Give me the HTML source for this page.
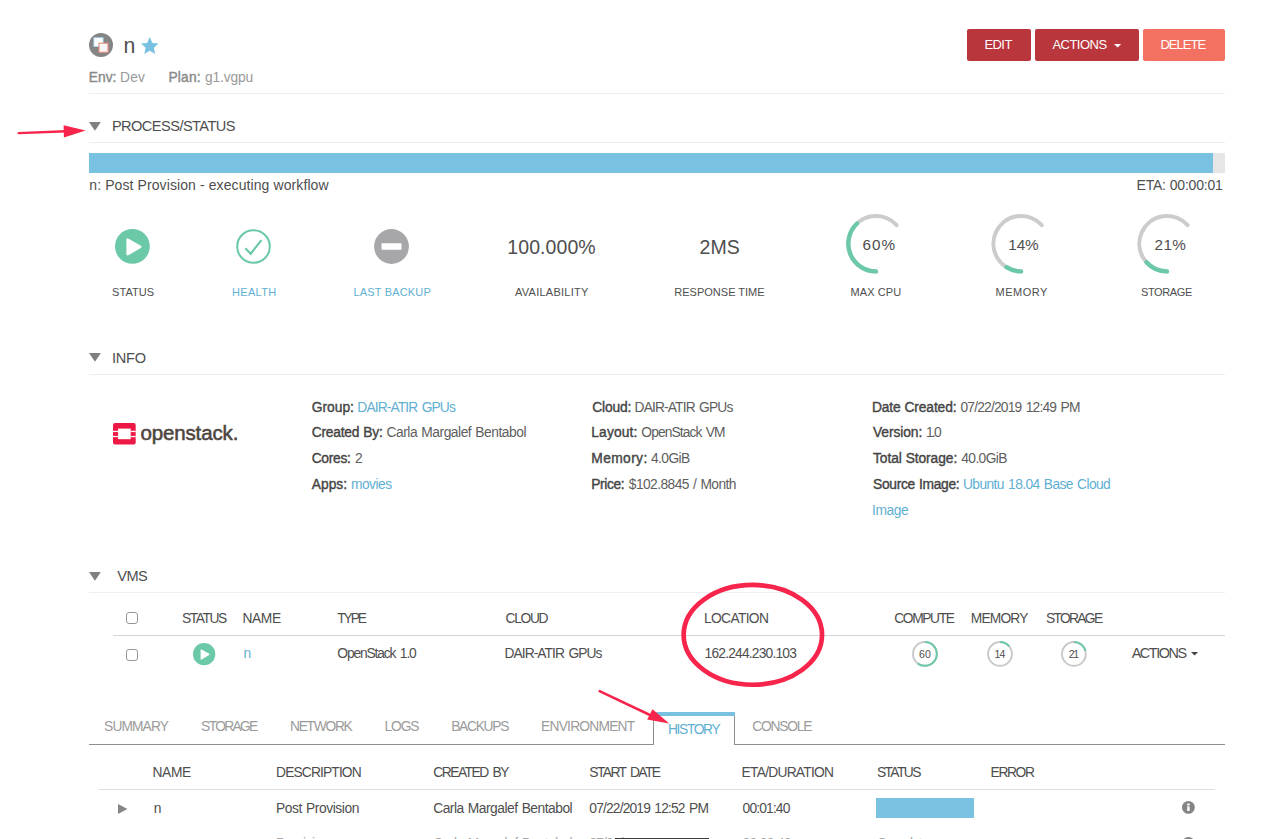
<!DOCTYPE html>
<html lang="en"><head><meta charset="utf-8"><title>n - Instance</title>
<style>
html,body{margin:0;padding:0;background:#fff;}
body{width:1263px;height:839px;overflow:hidden;position:relative;font-family:"Liberation Sans",sans-serif;color:#444;}
.t{position:absolute;white-space:nowrap;line-height:1;margin:0;padding:0;}
.b{font-weight:bold;}
.hr{position:absolute;height:1px;background:#eee;}
.bx{position:absolute;}
svg{position:absolute;overflow:visible;}
a{color:inherit;text-decoration:none;}
</style></head>
<body>
<header>
<svg style="left:88.5px;top:33px;" width="24" height="24" viewBox="0 0 24 24"><circle cx="12" cy="12" r="12" fill="#858585"/>
<rect x="4.9" y="4.7" width="9.2" height="8.8" fill="#fff" stroke="#a5d9ee" stroke-width="0.9"/>
<rect x="10.0" y="10.2" width="9" height="9.1" fill="#f6f6f6" stroke="#e98b7e" stroke-width="1.1"/></svg>
<h1 class="t" style="left:123.40px;top:35px;font-size:21.2px;color:#4e4e4e;font-weight:normal;">n</h1>
<svg style="left:140.8px;top:36.9px;" width="17.5" height="17.4" viewBox="0 0 17.5 17.4"><polygon fill="#78c1e0" points="8.75,0 11.4,5.9 17.5,6.5 12.9,10.7 14.2,17 8.75,13.7 3.3,17 4.6,10.7 0,6.5 6.1,5.9"/></svg>
<b class="t" style="left:88.70px;top:71px;font-size:13.8px;color:#8a8a8a;letter-spacing:0.042px;font-weight:normal;-webkit-text-stroke:0.4px #8a8a8a;">Env:</b>
<span class="t" style="left:120.00px;top:71px;font-size:13.8px;color:#999;letter-spacing:0.182px;">Dev</span>
<b class="t" style="left:168.50px;top:71px;font-size:13.8px;color:#8a8a8a;letter-spacing:0.147px;font-weight:normal;-webkit-text-stroke:0.4px #8a8a8a;">Plan:</b>
<span class="t" style="left:204.90px;top:71px;font-size:13.8px;color:#999;letter-spacing:-0.137px;">g1.vgpu</span>
<div class="hr" style="left:89px;top:93px;width:1136px;height:1px;background:#eee;"></div>
<div class="bx" style="left:967.2px;top:29.3px;width:63.4px;height:31.5px;background:#b9363c;border-radius:2px;"></div>
<div class="bx" style="left:1034.5px;top:29.3px;width:104.6px;height:31.5px;background:#b9363c;border-radius:2px;"></div>
<div class="bx" style="left:1143.1px;top:29.3px;width:82.1px;height:31.5px;background:#f37160;border-radius:2px;"></div>
<span class="t" style="left:984.40px;top:38px;font-size:13px;color:#fff;letter-spacing:-0.557px;">EDIT</span>
<span class="t" style="left:1052.40px;top:38px;font-size:13px;color:#fff;letter-spacing:-0.519px;">ACTIONS</span>
<svg style="left:1114.3px;top:44.1px;" width="7.2" height="3.6" viewBox="0 0 7.2 3.6"><polygon points="0,0 7.2,0 3.6,3.6" fill="#fff"/></svg>
<span class="t" style="left:1160.40px;top:38px;font-size:13px;color:#fff;letter-spacing:-0.960px;">DELETE</span>
</header>
<section aria-label="Process/Status">
<svg style="left:89.0px;top:122.1px;" width="11.9" height="8.8" viewBox="0 0 11.9 8.8"><polygon points="0,0 11.9,0 5.95,8.8" fill="#808080"/></svg>
<h2 class="t" style="left:111.90px;top:119px;font-size:14.6px;color:#4e4e4e;letter-spacing:-0.553px;font-weight:normal;">PROCESS/STATUS</h2>
<div class="hr" style="left:89px;top:142px;width:1136px;height:1px;background:#eee;"></div>
<div class="bx" style="left:89px;top:153px;width:1136px;height:20px;background:#e6e6e6;"></div>
<div class="bx" style="left:89px;top:153px;width:1124.3px;height:20px;background:#78c1e0;"></div>
<span class="t" style="left:89.30px;top:178px;font-size:14px;color:#4e4e4e;letter-spacing:0.096px;">n: Post Provision - executing workflow</span>
<span class="t" style="left:1136.50px;top:178px;font-size:14px;color:#4e4e4e;letter-spacing:-0.209px;word-spacing:0.335px;">ETA: 00:00:01</span>
<svg style="left:115.29999999999998px;top:228.75px;" width="34.8" height="34.8" viewBox="0 0 34.8 34.8"><circle cx="17.4" cy="17.4" r="17.4" fill="#6cc9a8"/><path d="M12.60,10.55 L25.30,17.90 L12.60,25.25 Z" fill="#fff" stroke="#fff" stroke-width="2.40" stroke-linejoin="round"/></svg>
<svg style="left:235.9px;top:228.65px;" width="35" height="35" viewBox="0 0 35 35"><circle cx="17.5" cy="17.5" r="16.3" fill="#fff" stroke="#6cc9a8" stroke-width="2.1"/><path d="M9.3,19.3 L14.7,24.8 L25.4,11.1" fill="none" stroke="#6cc9a8" stroke-width="2.2"/></svg>
<svg style="left:374.1px;top:228.65px;" width="35" height="35" viewBox="0 0 35 35"><circle cx="17.5" cy="17.5" r="17.4" fill="#a7a7a9"/><rect x="7.5" y="14.2" width="20" height="6.6" rx="1" fill="#fff"/></svg>
<span class="t" style="left:507.30px;top:238px;font-size:19.5px;color:#4e4e4e;letter-spacing:0.073px;">100.000%</span>
<span class="t" style="left:699.40px;top:238px;font-size:19.5px;color:#4e4e4e;letter-spacing:0.156px;">2MS</span>
<svg style="left:0;top:0;" width="1263" height="839" viewBox="0 0 1263 839"><path d="M876.00,271.40 A27.7,27.7 0 1 1 896.59,225.17" fill="none" stroke="#ccc" stroke-width="4" stroke-linecap="round"/><path d="M876.00,271.40 A27.7,27.7 0 0 1 857.04,223.51" fill="none" stroke="#6cc9a8" stroke-width="4.4" stroke-linecap="round"/></svg>
<svg style="left:0;top:0;" width="1263" height="839" viewBox="0 0 1263 839"><path d="M1021.10,271.40 A27.7,27.7 0 1 1 1041.69,225.17" fill="none" stroke="#ccc" stroke-width="4" stroke-linecap="round"/><path d="M1021.10,271.40 A27.7,27.7 0 0 1 1006.45,267.21" fill="none" stroke="#6cc9a8" stroke-width="4.4" stroke-linecap="round"/></svg>
<svg style="left:0;top:0;" width="1263" height="839" viewBox="0 0 1263 839"><path d="M1167.00,271.40 A27.7,27.7 0 1 1 1187.59,225.17" fill="none" stroke="#ccc" stroke-width="4" stroke-linecap="round"/><path d="M1167.00,271.40 A27.7,27.7 0 0 1 1146.45,262.28" fill="none" stroke="#6cc9a8" stroke-width="4.4" stroke-linecap="round"/></svg>
<span class="t" style="left:862.60px;top:237px;font-size:15.3px;color:#4e4e4e;letter-spacing:0.993px;">60%</span>
<span class="t" style="left:1008.30px;top:237px;font-size:15.3px;color:#4e4e4e;letter-spacing:-0.107px;">14%</span>
<span class="t" style="left:1154.60px;top:237px;font-size:15.3px;color:#4e4e4e;letter-spacing:0.343px;">21%</span>
<span class="t" style="left:112.10px;top:287px;font-size:11px;color:#4e4e4e;letter-spacing:0.055px;">STATUS</span>
<span class="t" style="left:231.90px;top:287px;font-size:11px;color:#5fb0d2;letter-spacing:0.352px;">HEALTH</span>
<span class="t" style="left:353.60px;top:287px;font-size:11px;color:#5fb0d2;letter-spacing:0.153px;">LAST BACKUP</span>
<span class="t" style="left:515.00px;top:287px;font-size:11px;color:#4e4e4e;letter-spacing:0.257px;">AVAILABILITY</span>
<span class="t" style="left:674.30px;top:287px;font-size:11px;color:#4e4e4e;letter-spacing:0.006px;">RESPONSE TIME</span>
<span class="t" style="left:850.60px;top:287px;font-size:11px;color:#4e4e4e;letter-spacing:0.088px;">MAX CPU</span>
<span class="t" style="left:995.60px;top:287px;font-size:11px;color:#4e4e4e;letter-spacing:0.467px;">MEMORY</span>
<span class="t" style="left:1141.00px;top:287px;font-size:11px;color:#4e4e4e;letter-spacing:-0.375px;">STORAGE</span>
</section>
<section aria-label="Info">
<svg style="left:89.0px;top:353.2px;" width="11.9" height="8.8" viewBox="0 0 11.9 8.8"><polygon points="0,0 11.9,0 5.95,8.8" fill="#808080"/></svg>
<h2 class="t" style="left:111.90px;top:351px;font-size:14.6px;color:#4e4e4e;letter-spacing:-0.203px;font-weight:normal;">INFO</h2>
<div class="hr" style="left:89px;top:374px;width:1136px;height:1px;background:#eee;"></div>
<svg style="left:113.0px;top:423.2px;" width="22.7" height="21.7" viewBox="0 0 22.7 21.7"><rect x="0" y="0" width="22.7" height="21.6" rx="2" fill="#ed1944"/>
<rect x="5.1" y="5.6" width="12.6" height="10.6" fill="#fff"/>
<rect x="0" y="7.8" width="5.1" height="1.3" fill="#fff"/><rect x="0" y="12.9" width="5.1" height="1.3" fill="#fff"/>
<rect x="17.7" y="7.8" width="5" height="1.3" fill="#fff"/><rect x="17.7" y="12.9" width="5" height="1.3" fill="#fff"/></svg>
<span class="t" style="left:140.40px;top:423px;font-size:20.5px;color:#4e4540;letter-spacing:-0.128px;-webkit-text-stroke:0.55px #4e4540;">openstack.</span>
<b class="t" style="left:311.70px;top:401px;font-size:13.8px;color:#444;letter-spacing:0.011px;font-weight:normal;-webkit-text-stroke:0.38px #444;">Group:</b>
<span class="t" style="left:357.30px;top:401px;font-size:13.8px;color:#5fb0d2;letter-spacing:-0.885px;word-spacing:1.416px;">DAIR-ATIR GPUs</span>
<b class="t" style="left:311.70px;top:426px;font-size:13.8px;color:#444;letter-spacing:-0.216px;word-spacing:0.346px;font-weight:normal;-webkit-text-stroke:0.38px #444;">Created By:</b>
<span class="t" style="left:386.50px;top:426px;font-size:13.8px;color:#5e5e5e;letter-spacing:-0.464px;word-spacing:0.742px;">Carla Margalef Bentabol</span>
<b class="t" style="left:311.70px;top:452px;font-size:13.8px;color:#444;letter-spacing:-0.301px;font-weight:normal;-webkit-text-stroke:0.38px #444;">Cores:</b>
<span class="t" style="left:355.00px;top:452px;font-size:13.8px;color:#5e5e5e;">2</span>
<b class="t" style="left:311.70px;top:478px;font-size:13.8px;color:#444;letter-spacing:0.038px;font-weight:normal;-webkit-text-stroke:0.38px #444;">Apps:</b>
<span class="t" style="left:351.00px;top:478px;font-size:13.8px;color:#5fb0d2;letter-spacing:-0.521px;">movies</span>
<b class="t" style="left:592.30px;top:401px;font-size:13.8px;color:#444;letter-spacing:-0.190px;font-weight:normal;-webkit-text-stroke:0.38px #444;">Cloud:</b>
<span class="t" style="left:634.60px;top:401px;font-size:13.8px;color:#5e5e5e;letter-spacing:-0.868px;word-spacing:1.388px;">DAIR-ATIR GPUs</span>
<b class="t" style="left:591.30px;top:426px;font-size:13.8px;color:#444;letter-spacing:0.146px;font-weight:normal;-webkit-text-stroke:0.38px #444;">Layout:</b>
<span class="t" style="left:641.30px;top:426px;font-size:13.8px;color:#5e5e5e;letter-spacing:-0.903px;word-spacing:1.446px;">OpenStack VM</span>
<b class="t" style="left:591.30px;top:452px;font-size:13.8px;color:#444;letter-spacing:0.379px;font-weight:normal;-webkit-text-stroke:0.38px #444;">Memory:</b>
<span class="t" style="left:651.00px;top:452px;font-size:13.8px;color:#5e5e5e;letter-spacing:-0.575px;">4.0GiB</span>
<b class="t" style="left:591.30px;top:478px;font-size:13.8px;color:#444;letter-spacing:-0.387px;font-weight:normal;-webkit-text-stroke:0.38px #444;">Price:</b>
<span class="t" style="left:628.80px;top:478px;font-size:13.8px;color:#5e5e5e;letter-spacing:-0.577px;word-spacing:0.924px;">$102.8845 / Month</span>
<b class="t" style="left:872.00px;top:401px;font-size:13.8px;color:#444;letter-spacing:-0.131px;word-spacing:0.209px;font-weight:normal;-webkit-text-stroke:0.38px #444;">Date Created:</b>
<span class="t" style="left:960.50px;top:401px;font-size:13.8px;color:#5e5e5e;letter-spacing:-0.814px;word-spacing:1.302px;">07/22/2019 12:49 PM</span>
<b class="t" style="left:873.00px;top:426px;font-size:13.8px;color:#444;letter-spacing:-0.088px;font-weight:normal;-webkit-text-stroke:0.38px #444;">Version:</b>
<span class="t" style="left:925.90px;top:426px;font-size:13.8px;color:#5e5e5e;letter-spacing:-1.753px;">1.0</span>
<b class="t" style="left:873.00px;top:452px;font-size:13.8px;color:#444;letter-spacing:-0.079px;word-spacing:0.126px;font-weight:normal;-webkit-text-stroke:0.38px #444;">Total Storage:</b>
<span class="t" style="left:961.30px;top:452px;font-size:13.8px;color:#5e5e5e;letter-spacing:-0.625px;">40.0GiB</span>
<b class="t" style="left:873.00px;top:478px;font-size:13.8px;color:#444;letter-spacing:-0.297px;word-spacing:0.476px;font-weight:normal;-webkit-text-stroke:0.38px #444;">Source Image:</b>
<span class="t" style="left:963.00px;top:478px;font-size:13.8px;color:#5fb0d2;letter-spacing:-0.595px;word-spacing:0.952px;">Ubuntu 18.04 Base Cloud</span>
<span class="t" style="left:872.00px;top:504px;font-size:13.8px;color:#5fb0d2;letter-spacing:-0.418px;">Image</span>
</section>
<section aria-label="VMs">
<svg style="left:89.0px;top:571.9px;" width="11.9" height="8.8" viewBox="0 0 11.9 8.8"><polygon points="0,0 11.9,0 5.95,8.8" fill="#808080"/></svg>
<h2 class="t" style="left:117.30px;top:569px;font-size:14.6px;color:#4e4e4e;letter-spacing:-0.645px;font-weight:normal;">VMS</h2>
<div class="hr" style="left:89px;top:592px;width:1136px;height:1px;background:#eee;"></div>
<div class="bx" style="left:126.1px;top:612.1px;width:10.2px;height:10px;border:1px solid #979797;border-radius:3px;background:#fff;"></div>
<div class="bx" style="left:126.1px;top:649.3px;width:10.2px;height:10px;border:1px solid #979797;border-radius:3px;background:#fff;"></div>
<span class="t" style="left:182.10px;top:612px;font-size:13.8px;color:#4e4e4e;letter-spacing:-1.475px;">STATUS</span>
<span class="t" style="left:242.40px;top:612px;font-size:13.8px;color:#4e4e4e;letter-spacing:-0.386px;">NAME</span>
<span class="t" style="left:337.30px;top:612px;font-size:13.8px;color:#4e4e4e;letter-spacing:-2.111px;">TYPE</span>
<span class="t" style="left:505.50px;top:612px;font-size:13.8px;color:#4e4e4e;letter-spacing:-1.308px;">CLOUD</span>
<span class="t" style="left:704.00px;top:612px;font-size:13.8px;color:#4e4e4e;letter-spacing:-0.663px;">LOCATION</span>
<span class="t" style="left:894.30px;top:612px;font-size:13.8px;color:#4e4e4e;letter-spacing:-1.397px;">COMPUTE</span>
<span class="t" style="left:970.80px;top:612px;font-size:13.8px;color:#4e4e4e;letter-spacing:-0.847px;">MEMORY</span>
<span class="t" style="left:1045.90px;top:612px;font-size:13.8px;color:#4e4e4e;letter-spacing:-1.668px;">STORAGE</span>
<div class="hr" style="left:113.4px;top:635px;width:1111.6px;height:1px;background:#d4d4d4;"></div>
<svg style="left:192.75px;top:643.25px;" width="22.3" height="22.3" viewBox="0 0 22.3 22.3"><circle cx="11.15" cy="11.15" r="11.15" fill="#6cc9a8"/><path d="M8.32,7.11 L15.81,11.44 L8.32,15.78 Z" fill="#fff" stroke="#fff" stroke-width="1.41" stroke-linejoin="round"/></svg>
<span class="t" style="left:243.40px;top:647px;font-size:13.8px;color:#5fb0d2;">n</span>
<span class="t" style="left:337.30px;top:647px;font-size:13.8px;color:#4e4e4e;letter-spacing:-1.134px;word-spacing:1.815px;">OpenStack 1.0</span>
<span class="t" style="left:504.50px;top:647px;font-size:13.8px;color:#4e4e4e;letter-spacing:-0.938px;word-spacing:1.501px;">DAIR-ATIR GPUs</span>
<span class="t" style="left:704.60px;top:647px;font-size:13.8px;color:#4e4e4e;letter-spacing:-0.807px;">162.244.230.103</span>
<svg style="left:0;top:0;" width="1263" height="839" viewBox="0 0 1263 839"><circle cx="924.9" cy="653.9" r="11.9" fill="#fff" stroke="#c9c9c9" stroke-width="1.9"/><circle cx="924.9" cy="653.9" r="11.9" fill="none" stroke="#6cc9a8" stroke-width="2" stroke-dasharray="44.86 74.77" transform="rotate(-90 924.9 653.9)"/></svg>
<span class="t" style="left:918.90px;top:649px;font-size:10.5px;color:#4e4e4e;letter-spacing:0.160px;">60</span>
<svg style="left:0;top:0;" width="1263" height="839" viewBox="0 0 1263 839"><circle cx="1000" cy="653.9" r="11.9" fill="#fff" stroke="#c9c9c9" stroke-width="1.9"/><circle cx="1000" cy="653.9" r="11.9" fill="none" stroke="#6cc9a8" stroke-width="2" stroke-dasharray="10.47 74.77" transform="rotate(-90 1000 653.9)"/></svg>
<span class="t" style="left:994.50px;top:649px;font-size:10.5px;color:#4e4e4e;letter-spacing:-0.840px;">14</span>
<svg style="left:0;top:0;" width="1263" height="839" viewBox="0 0 1263 839"><circle cx="1073.9" cy="653.9" r="11.9" fill="#fff" stroke="#c9c9c9" stroke-width="1.9"/><circle cx="1073.9" cy="653.9" r="11.9" fill="none" stroke="#6cc9a8" stroke-width="2" stroke-dasharray="15.70 74.77" transform="rotate(-90 1073.9 653.9)"/></svg>
<span class="t" style="left:1068.65px;top:649px;font-size:10.5px;color:#4e4e4e;letter-spacing:-1.340px;">21</span>
<span class="t" style="left:1131.70px;top:646px;font-size:14.4px;color:#4e4e4e;letter-spacing:-1.444px;">ACTIONS</span>
<svg style="left:1190.7px;top:652px;" width="7.1" height="3.6" viewBox="0 0 7.1 3.6"><polygon points="0,0 7.1,0 3.55,3.6" fill="#444"/></svg>
</section>
<nav aria-label="Tabs">
<span class="t" style="left:104.10px;top:720px;font-size:13.8px;color:#9b9b9b;letter-spacing:-0.911px;">SUMMARY</span>
<span class="t" style="left:201.10px;top:720px;font-size:13.8px;color:#9b9b9b;letter-spacing:-1.668px;">STORAGE</span>
<span class="t" style="left:290.00px;top:720px;font-size:13.8px;color:#9b9b9b;letter-spacing:-1.285px;">NETWORK</span>
<span class="t" style="left:384.60px;top:720px;font-size:13.8px;color:#9b9b9b;letter-spacing:-1.145px;">LOGS</span>
<span class="t" style="left:451.20px;top:720px;font-size:13.8px;color:#9b9b9b;letter-spacing:-1.289px;">BACKUPS</span>
<span class="t" style="left:541.10px;top:720px;font-size:13.8px;color:#9b9b9b;letter-spacing:-0.782px;">ENVIRONMENT</span>
<span class="t" style="left:752.20px;top:720px;font-size:13.8px;color:#9b9b9b;letter-spacing:-1.211px;">CONSOLE</span>
<div class="hr" style="left:89px;top:744px;width:1136px;height:1px;background:#8e8e8e;"></div>
<div class="bx" style="left:653px;top:712.2px;width:82px;height:32.8px;background:#fff;"></div>
<div class="bx" style="left:653px;top:715.5px;width:1px;height:29.5px;background:#8e8e8e;"></div>
<div class="bx" style="left:734px;top:715.5px;width:1px;height:29.5px;background:#8e8e8e;"></div>
<div class="bx" style="left:653px;top:712.2px;width:82px;height:3.6px;background:#78c1e0;"></div>
<span class="t" style="left:668.00px;top:723px;font-size:13.8px;color:#5fb0d2;letter-spacing:-1.371px;">HISTORY</span>
</nav>
<section aria-label="History">
<span class="t" style="left:152.50px;top:766px;font-size:13.8px;color:#4e4e4e;letter-spacing:-0.386px;">NAME</span>
<span class="t" style="left:276.10px;top:766px;font-size:13.8px;color:#4e4e4e;letter-spacing:-0.872px;">DESCRIPTION</span>
<span class="t" style="left:433.20px;top:766px;font-size:13.8px;color:#4e4e4e;letter-spacing:-1.478px;word-spacing:2.365px;">CREATED BY</span>
<span class="t" style="left:589.30px;top:766px;font-size:13.8px;color:#4e4e4e;letter-spacing:-1.575px;word-spacing:2.520px;">START DATE</span>
<span class="t" style="left:741.60px;top:766px;font-size:13.8px;color:#4e4e4e;letter-spacing:-0.755px;">ETA/DURATION</span>
<span class="t" style="left:876.90px;top:766px;font-size:13.8px;color:#4e4e4e;letter-spacing:-1.575px;">STATUS</span>
<span class="t" style="left:990.60px;top:766px;font-size:13.8px;color:#4e4e4e;letter-spacing:-1.390px;">ERROR</span>
<div class="hr" style="left:99px;top:789px;width:1116.4px;height:1px;background:#dedede;"></div>
<svg style="left:117.5px;top:803.5px;" width="9.4" height="10" viewBox="0 0 9.4 10"><polygon points="0,0 9.4,5 0,10" fill="#858585"/></svg>
<span class="t" style="left:153.80px;top:802px;font-size:13.8px;color:#4e4e4e;">n</span>
<span class="t" style="left:276.10px;top:802px;font-size:13.8px;color:#4e4e4e;letter-spacing:-0.431px;word-spacing:0.689px;">Post Provision</span>
<span class="t" style="left:433.20px;top:802px;font-size:13.8px;color:#4e4e4e;letter-spacing:-0.496px;word-spacing:0.793px;">Carla Margalef Bentabol</span>
<span class="t" style="left:589.30px;top:802px;font-size:13.8px;color:#4e4e4e;letter-spacing:-0.834px;word-spacing:1.335px;">07/22/2019 12:52 PM</span>
<span class="t" style="left:742.60px;top:802px;font-size:13.8px;color:#4e4e4e;letter-spacing:-0.847px;">00:01:40</span>
<div class="bx" style="left:876.4px;top:798.1px;width:97.8px;height:19.8px;background:#78c1e0;"></div>
<svg style="left:1181.8px;top:801.4px;" width="12.8" height="12.8" viewBox="0 0 12.8 12.8"><circle cx="6.4" cy="6.4" r="6.4" fill="#858585"/><rect x="5.2" y="5.4" width="2.4" height="4.6" fill="#fff"/><rect x="5.2" y="2.5" width="2.4" height="2" fill="#fff"/></svg>
<span class="t" style="left:276.10px;top:837px;font-size:13.8px;color:#a6a6a6;letter-spacing:-0.384px;">Provision</span>
<span class="t" style="left:433.20px;top:837px;font-size:13.8px;color:#a6a6a6;letter-spacing:-0.496px;word-spacing:0.793px;">Carla Margalef Bentabol</span>
<span class="t" style="left:589.30px;top:837px;font-size:13.8px;color:#a6a6a6;letter-spacing:-0.834px;word-spacing:1.335px;">07/22/2019 12:50 PM</span>
<span class="t" style="left:742.60px;top:837px;font-size:13.8px;color:#a6a6a6;letter-spacing:-0.705px;">00:00:42</span>
<span class="t" style="left:876.90px;top:837px;font-size:13.8px;color:#a6a6a6;letter-spacing:-0.911px;">Complete</span>
<svg style="left:1181.8px;top:837.4px;" width="12.8" height="12.8" viewBox="0 0 12.8 12.8"><circle cx="6.4" cy="6.4" r="6.4" fill="#858585"/><rect x="5.2" y="5.4" width="2.4" height="4.6" fill="#fff"/><rect x="5.2" y="2.5" width="2.4" height="2" fill="#fff"/></svg>
<div class="bx" style="left:615.1px;top:838px;width:93.8px;height:6px;background:#3c3c3c;"></div>
</section>
<aside aria-hidden="true">
<svg style="left:0;top:0;pointer-events:none;" width="1263" height="839" viewBox="0 0 1263 839"><line x1="18.7" y1="133.1" x2="66" y2="131.3" stroke="#f7244b" stroke-width="2.4" stroke-linecap="round"/>
<polygon points="85.7,130.4 63.6,125.3 63.9,137.4" fill="#f7244b"/>
<ellipse cx="752.85" cy="634.85" rx="69.2" ry="49.9" fill="none" stroke="#f7244b" stroke-width="4.7"/>
<line x1="599.6" y1="691.2" x2="651" y2="715.5" stroke="#f7244b" stroke-width="2.5" stroke-linecap="round"/>
<polygon points="669.2,723.5 652.5,709.3 647.2,719.6" fill="#f7244b"/></svg>
</aside>
</body></html>
